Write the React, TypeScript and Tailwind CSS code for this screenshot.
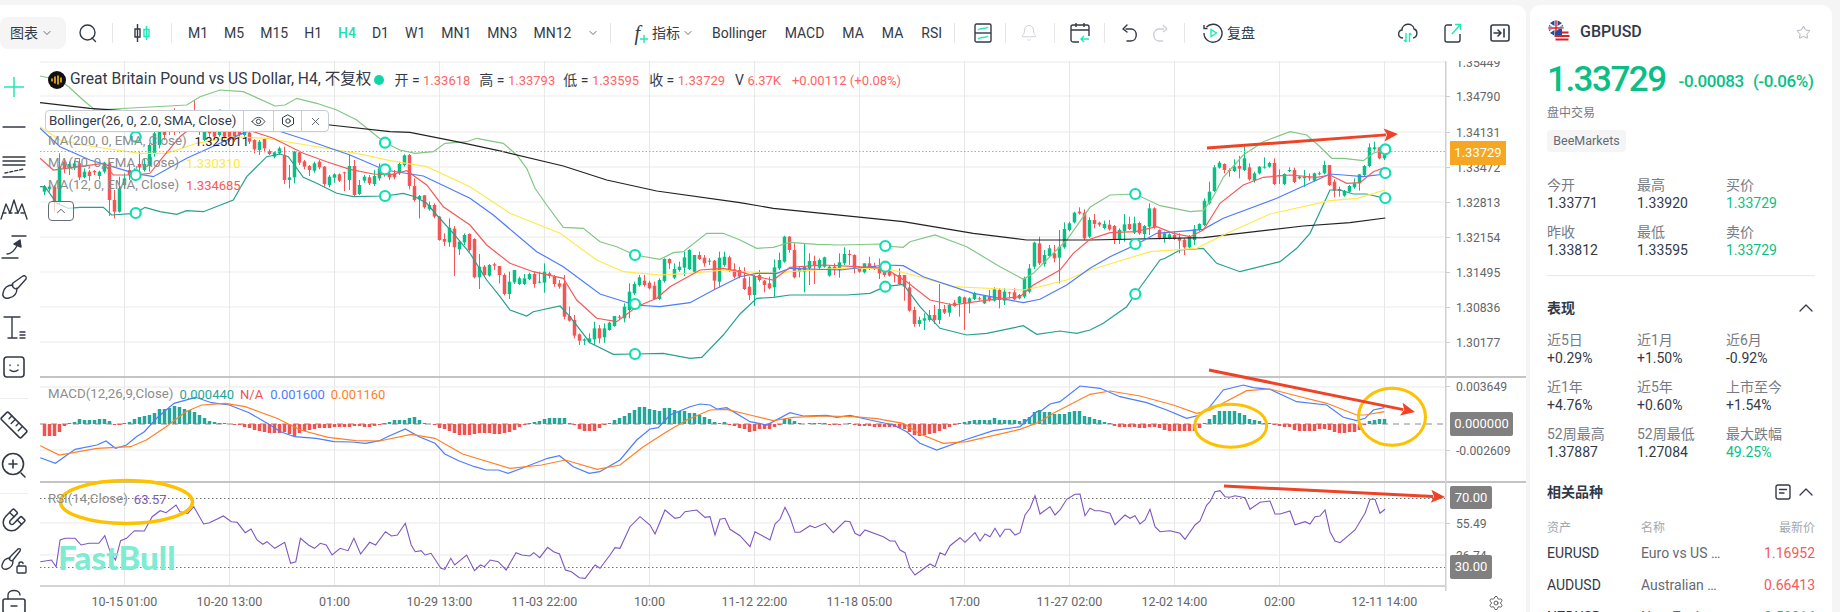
import React from "react";
import { Bell, ChevronDown, ChevronUp, Magnet, Settings, Star, X } from "lucide-react";

type P = number[];

const Z = (ox: number, pts: P[]) => pts.map(([x, y]) => [ox + x / 3, 90 + y / 3]);
const Y230 = (sx: number, ox: number, pts: P[]) => pts.map(([x, y]) => [ox + x / sx, 230 + y / 3]);
const toD = (pts: number[][]) => pts.map(([x, y], i) => `${i ? "L" : "M"}${x.toFixed(1)} ${y.toFixed(1)}`).join("");

const upper = [
  ...Z(40, [[0, -42], [57, -30], [87, -9], [129, 30], [165, 60], [440, 45], [480, 20], [540, 0], [610, 5], [705, 48], [735, 45], [770, 25], [830, 40], [890, 60], [950, 90], [1035, 158]]),
  ...Z(390, [[30, 180], [75, 190], [130, 185], [165, 160], [230, 155], [260, 145], [340, 160], [380, 195], [410, 235], [435, 295], [470, 345], [520, 412], [580, 415], [630, 455], [680, 470], [735, 495], [810, 508], [850, 488], [880, 485], [950, 430], [1000, 430], [1050, 450]]),
  ...Z(740, [[50, 475], [100, 472], [150, 457], [230, 463], [300, 465], [420, 462], [436, 468], [490, 472], [510, 455], [585, 435], [680, 470], [730, 500], [780, 530], [850, 568], [880, 550], [980, 450], [1050, 352]]),
  ...Z(1090, [[60, 315], [136, 312], [210, 347], [300, 365], [340, 362], [370, 320], [400, 262], [460, 195], [520, 155], [600, 125], [650, 135], [690, 170], [725, 205], [760, 205], [820, 212], [850, 190], [886, 178]]),
];
const lower = [
  ...Z(40, [[0, 290], [15, 290], [50, 340], [85, 355], [120, 352], [190, 352], [215, 375], [285, 370], [315, 352], [360, 365], [410, 373], [440, 362], [490, 365], [580, 330], [620, 260], [680, 200], [720, 192], [745, 200], [790, 262], [830, 280], [890, 310], [940, 320], [1035, 318]]),
  ...Z(390, [[40, 310], [75, 320], [110, 340], [140, 375], [190, 430], [240, 490], [290, 570], [330, 620], [360, 660], [410, 678], [430, 665], [510, 648], [540, 680], [600, 758], [670, 793], [735, 792], [820, 790], [900, 805], [935, 802], [1000, 735], [1050, 672]]),
  ...Z(740, [[50, 625], [100, 622], [150, 615], [320, 615], [390, 610], [436, 590], [490, 583], [540, 650], [600, 715], [680, 735], [740, 730], [850, 707], [890, 733], [960, 723], [1010, 730], [1050, 720]]),
  ...Z(1090, [[40, 700], [110, 650], [136, 612], [210, 510], [225, 505], [270, 480], [340, 475], [380, 520], [450, 545], [570, 515], [620, 475], [660, 430], [720, 300], [750, 300], [790, 312], [830, 312], [886, 325]]),
];
const ma12 = [
  ...Z(40, [[0, 205], [40, 240], [100, 232], [190, 220], [220, 255], [285, 255], [330, 250], [370, 200], [420, 140], [470, 100], [540, 60], [640, 125], [700, 145], [790, 190], [860, 215], [930, 238], [1000, 252], [1050, 255]]),
  ...Z(390, [[50, 242], [110, 285], [160, 350], [240, 405], [290, 465], [360, 520], [430, 545], [520, 565], [560, 630], [620, 685], [680, 695], [740, 650], [800, 625], [840, 590], [930, 540], [1000, 535], [1050, 545]]),
  ...Z(740, [[50, 560], [100, 570], [150, 532], [250, 525], [350, 530], [436, 535], [500, 575], [570, 630], [640, 645], [730, 632], [840, 620], [880, 585], [960, 540], [1000, 490], [1050, 448]]),
  ...Z(1090, [[60, 428], [136, 425], [200, 410], [250, 430], [300, 440], [340, 420], [390, 340], [460, 285], [520, 262], [600, 255], [680, 262], [720, 255], [770, 280], [810, 278], [850, 245], [886, 232]]),
];
const ma50 = [
  ...Z(40, [[0, 115], [60, 170], [150, 210], [285, 250], [340, 260], [440, 205], [550, 155], [620, 125], [700, 118], [800, 150], [930, 195], [1035, 240]]),
  ...Z(390, [[100, 258], [240, 325], [310, 375], [440, 485], [520, 530], [630, 612], [735, 645], [810, 650], [900, 638], [975, 598], [1050, 560]]),
  ...Z(740, [[50, 550], [110, 550], [150, 535], [300, 540], [436, 525], [490, 527], [550, 560], [700, 610], [850, 638], [900, 628], [980, 585], [1050, 535]]),
  ...Z(1090, [[60, 500], [136, 465], [200, 430], [340, 418], [400, 385], [560, 325], [720, 252], [760, 255], [820, 260], [886, 252]]),
];
const maYellow = [
  ...Z(40, [[0, 110], [60, 150], [130, 165], [230, 180], [300, 190], [380, 190], [470, 160], [580, 140], [680, 145], [800, 165], [950, 190], [1050, 212]]),
  ...Z(390, [[110, 230], [240, 290], [360, 370], [510, 430], [620, 510], [700, 545], [810, 555], [900, 550], [1000, 540], [1050, 545]]),
  ...Z(740, [[110, 550], [150, 545], [300, 535], [436, 535], [520, 555], [640, 590], [850, 600], [900, 590], [980, 570], [1050, 540]]),
  ...Z(1090, [[180, 485], [320, 475], [400, 435], [540, 372], [720, 332], [800, 325], [886, 300]]),
];
const maBlack = [
  ...Z(40, [[0, 38], [150, 55], [870, 105], [1050, 125]]),
  ...Z(390, [[60, 127], [200, 155], [340, 185], [520, 228], [650, 270], [800, 303], [1050, 338]]),
  ...Z(740, [[100, 355], [490, 395], [700, 430], [860, 450], [1050, 450]]),
  ...Z(1090, [[340, 443], [640, 408], [780, 398], [886, 384]]),
];

// [green, high, top, bottom, low], one row per bar
const bars: number[][] = [
  [1,285,290,305,315],[1,285,290,298,305],[0,285,290,335,365],[1,190,230,335,345],[0,205,215,235,250],[1,215,222,235,255],[1,212,220,235,240],[0,205,220,262,270],[1,235,245,262,265],[0,240,245,258,272],
  [0,240,243,247,255],[1,242,245,258,268],[1,215,218,245,250],[0,215,220,330,378],[0,300,330,365,385],[1,260,295,365,368],[1,250,265,285,295],[0,225,240,255,270],[1,235,240,250,260],[0,185,222,232,245],
  [1,205,222,240,245],[1,160,165,228,245],[1,125,130,190,200],[1,118,120,165,175],[0,110,120,135,150],[1,95,110,125,135],[0,55,100,125,135],[1,80,100,120,130],[0,60,100,115,125],[1,70,85,110,120],
  [0,30,70,100,120],[0,80,100,125,135],[1,100,105,150,155],[0,105,110,130,140],[0,115,120,140,150],[1,105,110,135,140],[0,120,125,140,148],[0,120,125,150,155],[0,118,120,150,155],[0,122,125,135,140],
  [1,118,120,135,140],[0,122,128,155,162],[0,148,150,178,190],[1,150,155,180,195],[0,145,147,175,187],[0,178,183,192,195],[1,185,187,200,205],[1,170,175,190,195],[0,170,197,270,282],[1,225,262,270,295],
  [1,183,185,262,280],[0,185,187,218,225],[0,210,214,230,238],[0,225,228,240,258],[1,215,220,242,248],[0,210,215,232,238],[0,228,230,282,290],[1,255,260,285,292],[1,250,253,263,278],[0,250,253,272,276],
  [0,245,247,248,303],[1,195,228,270,300],[0,210,228,315,320],[1,270,285,312,315],[1,255,260,272,278],[0,255,262,280,285],[1,240,258,282,288],[1,220,235,265,272],[0,238,240,252,260],[0,245,250,262,270],
  [0,240,250,262,268],[1,215,222,250,255],[1,193,196,225,230],[0,192,195,288,298],[0,265,288,330,335],[1,315,318,328,385],[0,315,316,352,356],[1,335,345,358,362],[0,340,345,380,385],[0,378,380,450,452],
  [0,430,447,455,468],[1,385,413,457,470],[0,408,416,472,558],[1,450,455,478,495],[1,430,435,457,465],[0,430,432,480,485],[0,445,447,562,565],[1,492,530,562,597],[0,525,530,555,560],[1,522,525,557,560],
  [0,518,523,527,540],[0,528,528,555,580],[0,550,555,612,616],[1,545,575,612,627],[1,540,540,577,582],[1,560,565,582,585],[1,552,565,582,585],[1,548,552,567,570],[0,545,552,582,593],[1,545,575,578,580],
  [1,520,545,578,608],[0,545,550,558,565],[0,555,560,582,590],[0,570,580,590,596],[0,555,580,680,688],[0,650,678,692,695],[0,675,690,737,745],[0,730,733,752,765],[1,745,748,752,765],[1,730,745,757,760],
  [1,695,715,748,765],[0,705,715,745,760],[1,700,715,742,758],[1,695,698,720,722],[1,680,678,708,710],[0,675,680,682,690],[1,640,650,685,697],[1,580,605,660,685],[1,575,582,610,615],[1,555,562,585,590],
  [0,555,572,585,590],[0,572,578,595,598],[0,575,587,627,630],[1,565,570,627,630],[1,505,507,573,578],[0,505,507,520,537],[1,520,537,563,567],[1,515,530,540,545],[1,485,502,533,558],[1,478,480,537,540],
  [1,495,495,545,548],[0,485,495,507,510],[0,495,503,520,530],[1,505,512,515,525],[0,510,512,572,598],[1,485,503,575,592],[1,485,500,525,530],[0,497,502,543,546],[0,520,538,560,565],[0,530,540,560,565],
  [0,532,565,597,600],[0,560,590,615,630],[1,555,558,615,648],[0,540,555,570,575],[0,570,572,585,607],[0,560,580,595,598],[1,508,532,592,620],[1,488,510,535,540],[1,437,440,515,518],[0,438,440,480,488],
  [0,460,480,562,565],[1,530,535,545,562],[1,462,530,545,607],[1,490,513,535,585],[0,497,513,527,582],[1,505,510,533,537],[1,500,502,530,533],[1,525,530,557,560],[0,520,530,540,555],[1,490,517,540,563],
  [1,472,492,520,525],[0,480,492,495,525],[0,493,495,535,550],[0,530,533,545,548],[1,520,520,547,550],[0,500,520,535,540],[0,518,528,532,540],[0,505,530,550,567],[0,535,540,555,560],[0,530,545,557,560],
  [0,552,553,556,577],[0,535,555,582,585],[0,555,555,590,632],[0,575,592,662,665],[0,650,660,702,710],[1,680,690,702,710],[1,670,685,692,720],[1,660,675,690,695],[0,645,675,690,702],[1,582,657,690,702],
  [0,645,657,668,672],[1,640,645,668,680],[0,630,638,648,650],[1,618,620,640,680],[0,620,622,642,720],[1,622,625,640,670],[1,605,610,627,630],[0,620,625,628,632],[1,615,618,640,642],[0,600,620,630,635],
  [1,592,598,632,635],[0,595,600,630,655],[1,595,605,632,645],[0,605,607,610,625],[0,595,607,628,630],[1,612,615,625,628],[1,560,565,620,625],[1,522,535,605,610],[1,455,458,530,537],[0,440,460,520,525],
  [1,480,495,522,530],[1,465,475,498,502],[0,465,490,505,517],[1,420,470,503,580],[1,397,417,472,476],[1,395,400,420,424],[1,365,368,397,400],[0,352,365,370,374],[0,358,368,445,450],[1,382,390,440,444],
  [0,372,390,402,415],[0,395,398,404,410],[1,392,402,414,418],[0,390,404,418,422],[0,405,408,450,462],[1,415,420,450,462],[1,372,403,423,455],[0,380,402,417,420],[1,380,400,428,432],[0,395,399,430,434],
  [1,405,408,432,445],[1,340,355,410,435],[0,352,355,412,416],[0,418,420,445,448],[1,425,430,445,458],[1,430,433,445,448],[0,425,435,447,450],[0,430,443,452,490],[0,445,449,472,495],[1,435,440,472,476],
  [1,405,418,450,465],[1,400,402,420,424],[1,325,332,405,408],[1,275,305,340,344],[1,225,232,303,306],[1,213,218,233,236],[0,220,222,240,250],[0,235,240,240,260],[1,208,230,243,246],[0,198,228,236,265],
  [1,170,205,240,243],[0,220,232,268,272],[1,245,250,272,278],[1,228,230,250,253],[1,202,230,233,236],[1,215,219,230,233],[0,205,219,282,285],[1,238,255,258,282],[1,250,252,282,285],[1,232,240,243,246],
  [0,233,240,276,279],[1,258,260,265,268],[1,240,260,265,290],[0,250,262,265,272],[1,248,250,272,275],[1,245,250,253,256],[1,212,225,250,253],[0,225,225,285,288],[0,268,275,302,322],[0,290,297,303,320],
  [1,300,303,317,320],[1,285,288,305,308],[1,265,280,292,296],[1,252,253,280,302],[1,225,228,255,258],[1,160,172,228,232],[1,155,172,178,182],[0,172,172,205,208],[1,185,195,205,210],
];

const hist: number[] = [
  -12,-12,-12,-8,-2,1,2,5,4,4,4,5,5,3,-1,-1,1,2,5,7,8,9,11,15,15,16,18,17,15,14,12,9,6,3,2,1,1,0,-1,-1,
  -3,-4,-6,-7,-8,-9,-9,-9,-8,-10,-12,-9,-7,-6,-5,-4,-4,-4,-3,-3,-3,-3,-2,-2,-3,-3,-2,-1,1,2,4,4,4,6,7,4,1,0,-1,-4,
  -5,-7,-9,-11,-11,-11,-10,-9,-9,-9,-10,-10,-9,-8,-6,-3,-1,1,2,3,5,6,6,6,6,1,-1,-5,-7,-7,-7,-4,-1,
  1,4,6,8,11,14,17,17,15,14,13,16,16,14,13,13,11,11,9,7,5,2,1,2,-1,-2,-4,-5,-8,-7,-5,-5,-5,-3,-1,5,5,3,1,0,1,1,1,1,-1,-1,-1,0,1,-1,-2,-2,-2,-3,-3,-3,-3,-3,-4,-5,-8,-11,-12,-11,-10,-9,-7,-5,-3,-1,1,2,3,4,4,4,4,6,4,4,4,4,3,5,7,12,14,
  12,12,10,10,10,12,13,13,8,7,5,4,2,1,-2,-3,-3,-3,-3,-4,-4,-3,-3,-4,-6,-7,-7,-7,-7,-7,-7,-4,1,5,9,13,13,13,13,11,9,5,4,3,1,1,-1,-2,-3,-3,-6,-7,-7,-7,-7,-5,-5,-6,-8,-9,-9,-8,-8,-6,-1,3,4,5,5,
];

const difLine = [
  ...Y230(2.529, 0, [[102,683],[140,700],[190,658],[245,645],[268,633],[292,655],[320,645],[345,620],[365,605],[400,560],[440,520],[495,502],[535,518],[580,525],[630,548],[680,583],[710,605],[745,620],[800,625],[845,635],[890,636],[925,640],[960,632],[980,620],[1025,597],[1060,620],[1100,640],[1125,672],[1160,692],[1200,710],[1230,720],[1260,720],[1285,730],[1320,715],[1385,685],[1415,677],[1450,710],[1490,730],[1517,725]]),
  ...Y230(3, 600, [[60,690],[110,630],[150,597],[175,593],[210,555],[270,530],[300,522],[330,525],[350,537],[380,533],[450,575],[500,585],[570,548],[610,558],[680,556],[710,562],[750,556],[810,570],[880,585],[920,605],[960,640],[1010,660],[1100,628],[1180,602],[1260,590],[1310,545]]),
  ...Y230(3, 1040, [[0,545],[30,522],[60,515],[120,468],[180,475],[240,500],[320,518],[380,540],[440,565],[480,555],[510,530],[550,480],[610,465],[640,473],[690,478],[770,515],[860,525],[910,562],[950,572],[975,565],[1000,540],[1033,533]]),
];
const deaLine = [
  ...Y230(2.529, 0, [[102,647],[150,675],[245,655],[330,650],[370,630],[420,590],[470,545],[510,525],[570,520],[620,530],[700,565],[760,600],[830,622],[900,632],[960,633],[1040,613],[1100,625],[1170,672],[1290,715],[1370,705],[1430,690],[1510,718]]),
  ...Y230(3, 600, [[60,705],[130,650],[200,605],[260,570],[330,540],[380,538],[450,555],[520,572],[580,562],[670,558],[760,560],[830,566],[910,580],[960,612],[1030,640],[1100,635],[1260,598],[1320,575]]),
  ...Y230(3, 1040, [[40,550],[150,493],[210,483],[300,498],[400,525],[470,550],[510,540],[620,482],[690,477],[760,495],[860,520],[950,555],[975,555],[1033,545]]),
];
const rsiLine = [
  ...Y230(2.529, 0, [[102,995],[130,990],[142,1010],[152,930],[165,925],[190,925],[205,945],[225,940],[250,940],[265,917],[280,970],[292,990],[305,932],[320,925],[340,902],[365,903],[385,860],[405,842],[420,848],[445,825],[455,845],[475,850],[490,830],[515,882],[530,878],[565,858],[585,875],[600,877],[620,908],[635,897],[650,930],[665,943],[675,935],[695,955],[720,937],[735,1000],[748,995],[760,925],[780,945],[795,955],[810,940],[825,945],[840,975],[860,955],[880,962],[895,925],[912,972],[935,937],[950,945],[975,905],[990,918],[1005,915],[1025,880],[1040,945],[1050,965],[1065,962],[1075,975],[1090,970],[1115,1015],[1125,1018],[1140,985],[1150,1005],[1180,975],[1200,1022],[1215,1005],[1225,1010],[1240,990],[1260,995],[1280,1020],[1305,968],[1320,975],[1340,978],[1350,968],[1365,983],[1385,952],[1400,965],[1415,972],[1430,1020],[1445,1025],[1465,1043],[1480,1045],[1505,1005]]),
  ...Y230(3, 600, [[0,1015],[30,975],[45,953],[60,955],[90,890],[120,860],[150,885],[165,912],[195,840],[225,865],[240,862],[255,845],[290,840],[315,862],[330,860],[345,915],[360,868],[375,865],[390,898],[420,917],[450,950],[465,905],[510,930],[525,882],[540,868],[555,832],[570,862],[585,907],[600,907],[630,887],[645,893],[675,880],[700,908],[735,873],[750,875],[765,910],[780,917],[795,900],[850,920],[870,933],[885,933],[900,960],[915,968],[930,1015],[945,1035],[990,1002],[1005,1010],[1020,968],[1035,975],[1050,947],[1080,923],[1095,937],[1125,908],[1140,933],[1155,912],[1170,920],[1185,895],[1200,920],[1215,898],[1230,898],[1245,915],[1260,908],[1275,855],[1290,835],[1305,797]]),
  ...Y230(3, 1040, [[0,852],[30,830],[45,855],[60,840],[80,808],[105,793],[120,792],[135,857],[150,835],[165,842],[180,842],[210,850],[225,884],[255,855],[270,865],[285,857],[300,882],[315,870],[330,838],[345,890],[360,905],[390,902],[420,910],[435,928],[465,885],[480,873],[500,825],[510,815],[525,785],[540,782],[555,800],[570,802],[585,797],[615,803],[630,838],[660,817],[690,813],[705,852],[720,852],[750,843],[765,884],[795,875],[810,882],[825,860],[840,858],[855,840],[870,905],[885,933],[900,938],[945,900],[975,850],[990,808],[1005,808],[1020,850],[1035,838]]),
];

const mainGrid = [96, 132, 167, 202, 237, 272, 307, 342];
const priceLabels: [number, string][] = [[96, "1.34790"], [132, "1.34131"], [167, "1.33472"], [202, "1.32813"], [237, "1.32154"], [272, "1.31495"], [307, "1.30836"], [342, "1.30177"], [62, "1.35449"]];
const timeLabels: [number, string][] = [[124.5, "10-15 01:00"], [229.5, "10-20 13:00"], [334.5, "01:00"], [439.5, "10-29 13:00"], [544.5, "11-03 22:00"], [649.5, "10:00"], [754.5, "11-12 22:00"], [859.5, "11-18 05:00"], [964.5, "17:00"], [1069.5, "11-27 02:00"], [1174.5, "12-02 14:00"], [1279.5, "02:00"], [1384.5, "12-11 14:00"]];
const rings = [[135.7, 136.7], [135.7, 175], [135.7, 213], [385, 142.7], [385, 169.3], [385, 196], [635, 255], [635, 304], [635, 354], [885.3, 246], [885.3, 266.7], [885.3, 286.7], [1135.3, 194], [1135.3, 244], [1135.3, 294], [1385.3, 149.3], [1385.3, 173], [1385.3, 198]];

function Arrow({ x1, y1, x2, y2 }: { x1: number; y1: number; x2: number; y2: number }) {
  const a = Math.atan2(y2 - y1, x2 - x1);
  const bx = x2 - 12 * Math.cos(a);
  const by = y2 - 12 * Math.sin(a);
  const px = 6.5 * Math.sin(a);
  const py = 6.5 * Math.cos(a);
  return (
    <g>
      <path d={`M${x1} ${y1}L${bx} ${by}`} stroke="#ee4326" strokeWidth="3" />
      <path d={`M${x2} ${y2}L${bx - px - 2 * Math.cos(a)} ${by + py - 2 * Math.sin(a)}L${bx + 1 * Math.cos(a)} ${by + Math.sin(a)}L${bx + px - 2 * Math.cos(a)} ${by - py - 2 * Math.sin(a)}Z`} fill="#ee4326" />
    </g>
  );
}

function ChartCanvas() {
  return (
    <svg viewBox="40 61 1486 551" className="block w-[1486px] h-[551px]">
      <defs>
        <clipPath id="chart-clip">
          <rect x="40" y="61" width="1405" height="525" />
        </clipPath>
        <clipPath id="axis-clip">
          <rect x="1446" y="61" width="80" height="551" />
        </clipPath>
      </defs>

      {mainGrid.map((y) => (
        <rect key={y} x="40" y={y - 1} width="1405" height="2" fill="#f5f5f5" />
      ))}
      <rect x="40" y="61" width="1405" height="2" fill="#f5f5f5" />
      {[387, 450, 523, 555].map((y) => (
        <rect key={y} x="40" y={y - 1} width="1405" height="2" fill="#f4f4f4" />
      ))}
      {timeLabels.map(([x]) => (
        <rect key={x} x={x - 0.5} y="61" width="1" height="525" fill="#e8e8e8" />
      ))}

      <g clipPath="url(#chart-clip)">
        {bars.map((b, i) => {
          const x = 44.5 + i * 5;
          const col = b[0] ? "#0abf85" : "#f55555";
          return (
            <g key={i} fill={col}>
              <rect x={x - 0.5} y={90 + b[1] / 3} width="1" height={(b[4] - b[1]) / 3} />
              <rect x={x - 1.75} y={90 + b[2] / 3} width="3.5" height={Math.max(1, (b[3] - b[2]) / 3)} />
            </g>
          );
        })}
        <path d={toD(upper)} fill="none" stroke="#82c784" strokeWidth="1.2" />
        <path d={toD(lower)} fill="none" stroke="#26a08f" strokeWidth="1.2" />
        <path d={toD(maBlack)} fill="none" stroke="#222222" strokeWidth="1.2" />
        <path d={toD(maYellow)} fill="none" stroke="#ffe94d" strokeWidth="1.2" />
        <path d={toD(ma50)} fill="none" stroke="#4d7cfe" strokeWidth="1.2" />
        <path d={toD(ma12)} fill="none" stroke="#f55a5a" strokeWidth="1.2" />

        <path d="M40 151.5H1445" stroke="#e8a33d" strokeWidth="1" strokeDasharray="1.5 2" />

        <path d="M40 424H1445" stroke="#8a8a8a" strokeWidth="1" strokeDasharray="6 5" />
        {hist.map((v, i) => (
          <rect key={i} x={44.5 + i * 5 - 1.75} y={v > 0 ? 424 - v : 424} width="3.5" height={Math.abs(v)} fill={v > 0 ? "#26a69a" : "#ef5350"} />
        ))}
        <path d={toD(difLine)} fill="none" stroke="#4d7cfe" strokeWidth="1.2" />
        <path d={toD(deaLine)} fill="none" stroke="#ff8126" strokeWidth="1.2" />

        <path d="M40 498.5H1445M40 567.5H1445" stroke="#777777" strokeWidth="1" strokeDasharray="1.5 2.5" />
        <path d={toD(rsiLine)} fill="none" stroke="#7e57c2" strokeWidth="1.1" />
      </g>

      {rings.map(([x, y], i) => (
        <circle key={i} cx={x} cy={y} r="5" fill="#ffffff" stroke="#0ae0b0" strokeWidth="2.2" />
      ))}

      <rect x="40" y="376" width="1486" height="2" fill="#c4c4c4" />
      <rect x="40" y="481" width="1486" height="2" fill="#c4c4c4" />
      <rect x="40" y="585" width="1405" height="2" fill="#d4d4d4" />
      <rect x="1445" y="61" width="1.5" height="530" fill="#d0d0d0" />

      {[96, 132, 167, 202, 237, 272, 307, 342, 386, 450, 523].map((y) => (
        <rect key={y} x="1446" y={y} width="4" height="1" fill="#cccccc" />
      ))}

      <g clipPath="url(#axis-clip)" className="fill-[#666666] text-[12.2px]">
        {priceLabels.map(([y, t]) => (
          <text key={t} x="1456" y={y + 4.5}>{t}</text>
        ))}
        <text x="1456" y="390.5">0.003649</text>
        <text x="1456" y="454.5">-0.002609</text>
        <text x="1456" y="527.5">55.49</text>
        <text x="1456" y="559.5">36.74</text>
      </g>

      <g className="fill-[#666666] text-[12.5px]" textAnchor="middle">
        {timeLabels.map(([x, t]) => (
          <text key={t} x={x} y="606">{t}</text>
        ))}
      </g>

      <ellipse cx="1230.7" cy="425.7" rx="36" ry="21.5" fill="none" stroke="#fdc100" strokeWidth="3" />
      <ellipse cx="1392" cy="416.7" rx="33.5" ry="28.5" fill="none" stroke="#fdc100" strokeWidth="3" />
      <ellipse cx="126.5" cy="502" rx="66" ry="21.5" fill="none" stroke="#fdc100" strokeWidth="3.5" />

      <Arrow x1={1207} y1={148} x2={1398} y2={134} />
      <Arrow x1={1209} y1={370} x2={1415} y2={412} />
      <Arrow x1={1224} y1={486} x2={1445} y2={497} />
    </svg>
  );
}

function Tool({ children }: { children: React.ReactNode }) {
  return <div className="h-[40px] w-7 flex items-center justify-center shrink-0">{children}</div>;
}

const ink = { fill: "none", stroke: "#333a47", strokeWidth: 1.4, strokeLinecap: "round", strokeLinejoin: "round" } as const;

function LeftTools() {
  return (
    <div className="w-10 shrink-0 pt-[6px] overflow-hidden">
      <Tool>
        <svg viewBox="0 0 28 28" className="w-7 h-7" fill="none" stroke="#1de9b6" strokeWidth="1.5"><path d="M4 14H24M14 4V24" /></svg>
      </Tool>
      <Tool>
        <svg viewBox="0 0 28 28" className="w-7 h-7" {...ink}><path d="M3 14H25" /></svg>
      </Tool>
      <Tool>
        <svg viewBox="0 0 28 28" className="w-7 h-7" {...ink}><path d="M3 4H25M3 8H25M3 12H25M3 24H25" /><path d="M5 20L24 16" strokeDasharray="3 2" /></svg>
      </Tool>
      <Tool>
        <svg viewBox="0 0 28 28" className="w-7 h-7" {...ink}><path d="M1 26L6 11L10 20L14 7L18 20L22 11L27 26" /><path d="M3 20H25" strokeDasharray="3 3" /></svg>
      </Tool>
      <Tool>
        <svg viewBox="0 0 28 28" className="w-7 h-7" {...ink}><path d="M12 3H26M2 25H18M7 21C12 21 15 17 18 11" /><path d="M14 11L20 7L21 14Z" fill="#333a47" /></svg>
      </Tool>
      <Tool>
        <svg viewBox="0 0 28 28" className="w-7 h-7" {...ink}><path d="M23 3C25 2 27 4 26 6L18 15C17 16 15 16 14 15L13 14C12 13 12 11 13 10Z" /><path d="M13 12C8 12 4 15 3 20C2 24 5 26 9 25C14 24 17 20 17 15" /></svg>
      </Tool>
      <Tool>
        <svg viewBox="0 0 28 28" className="w-7 h-7" {...ink}><path d="M4 4H20M12 4V25M8 25H17M20 19H25M20 22H25M20 25H25" /></svg>
      </Tool>
      <Tool>
        <svg viewBox="0 0 28 28" className="w-7 h-7" {...ink}><rect x="4" y="4" width="20" height="20" rx="3" strokeWidth="1.6" /><path d="M10 12V12.5M18 12V12.5M10 17C12 19 16 19 18 17" /></svg>
      </Tool>
      <div className="h-px bg-[#eeeeee] w-7 mt-[11px] mb-[6px]" />
      <Tool>
        <svg viewBox="0 0 28 28" className="w-7 h-7" {...ink}><g transform="rotate(45 14 14)"><rect x="0" y="9" width="28" height="10" rx="1.5" strokeWidth="1.6" /><path d="M6 9V13M11 9V15M16 9V13M21 9V15" /></g></svg>
      </Tool>
      <Tool>
        <svg viewBox="0 0 28 28" className="w-7 h-7" {...ink}><circle cx="13" cy="13" r="10.5" strokeWidth="1.6" /><path d="M9 13H17M13 9V17M21 22L25 26" strokeWidth="1.6" /></svg>
      </Tool>
      <div className="h-px bg-[#eeeeee] w-7 mt-[8px] mb-[6px]" />
      <Tool>
        <Magnet className="w-[26px] h-[26px] rotate-180 text-[#333a47]" strokeWidth={1.4} />
      </Tool>
      <Tool>
        <svg viewBox="0 0 28 28" className="w-7 h-7" {...ink}><path d="M18 3C20 2 21 3 20 5L13 14C12 15 11 15 10 14C9 13 9 12 10 11Z" /><path d="M10 12C6 12 3 15 2 19C1 22 4 24 7 23C10 22 13 19 13 15" /><rect x="17" y="20" width="9" height="7" rx="1" /><path d="M19 20V17.5C19 15.5 23 15.5 23 17.5" /></svg>
      </Tool>
      <Tool>
        <svg viewBox="0 0 28 28" className="w-7 h-7" {...ink}><path d="M8 13V9C8 3 20 3 20 9" /><rect x="3" y="13" width="22" height="14" rx="2" strokeWidth="1.6" /><path d="M11 20H17" /></svg>
      </Tool>
    </div>
  );
}

function Sep({ className }: { className: string }) {
  return <div className={`w-px h-5 bg-[#e6e6e6] shrink-0 ${className}`} />;
}

const periods = ["M1", "M5", "M15", "H1", "H4", "D1", "W1", "MN1", "MN3", "MN12"];

function TopBar() {
  return (
    <div className="h-[56px] flex items-center text-[14px] text-[#333a47] shrink-0">
      <div className="w-[66px] h-[32px] bg-[#f5f5f5] rounded-lg flex items-center pl-[10px] gap-[3px] shrink-0">
        <span>图表</span>
        <ChevronDown className="w-3 h-3" strokeWidth={1.5} />
      </div>
      <svg viewBox="0 0 20 20" className="w-5 h-5 ml-[12px]" {...ink}><circle cx="9.5" cy="9.5" r="7.5" /><path d="M14 15L17.5 18.5" /></svg>
      <Sep className="ml-[14px]" />
      <svg viewBox="0 0 18 20" className="w-[18px] h-5 ml-[20px]" fill="none" strokeWidth="1.4">
        <path d="M4.5 1V19M2 6H7V14H2Z" stroke="#333a47" />
        <path d="M13.5 3V17M11 6.5H16V13.5H11Z" stroke="#1de9b6" />
      </svg>
      <Sep className="ml-[20px]" />
      <div className="flex items-center gap-4 ml-[16px]">
        {periods.map((p) => (
          <span key={p} className={p === "H4" ? "text-[#1de0ae] font-medium" : ""}>{p}</span>
        ))}
      </div>
      <ChevronDown className="w-3 h-3 ml-[16px]" strokeWidth={1.5} />
      <Sep className="ml-[11px]" />
      <div className="flex items-center ml-[23px] gap-[2px]">
        <span className="font-['Liberation_Serif',serif] italic text-[20px] leading-none">f</span>
        <svg viewBox="0 0 8 8" className="w-2 h-2 mt-3 -ml-[2px]" stroke="#1de9b6" strokeWidth="1.4"><path d="M0 4H8M4 0V8" /></svg>
      </div>
      <span className="ml-[4px]">指标</span>
      <ChevronDown className="w-3 h-3 ml-[2px]" strokeWidth={1.5} />
      <div className="flex items-center gap-[18px] ml-[18px]">
        <span>Bollinger</span>
        <span>MACD</span>
        <span>MA</span>
        <span>MA</span>
        <span>RSI</span>
      </div>
      <Sep className="ml-[12px]" />
      <svg viewBox="0 0 18 20" className="w-[18px] h-5 ml-[19px]" fill="none" strokeWidth="1.4">
        <rect x="1" y="1" width="16" height="18" rx="1.5" stroke="#333a47" />
        <path d="M1 10H17" stroke="#333a47" />
        <path d="M4 7C7 4 10 7 14 4M4 16C7 13 10 16 14 13" stroke="#1de9b6" />
      </svg>
      <Sep className="ml-[13px]" />
      <Bell className="w-[18px] h-[20px] ml-[14px] text-[#ccd0d6]" strokeWidth={1.3} />
      <Sep className="ml-[16px]" />
      <svg viewBox="0 0 20 22" className="w-5 h-[22px] ml-[15px]" fill="none" strokeWidth="1.4">
        <path d="M9 20H3C2 20 1 19 1 18V5C1 4 2 3 3 3H17C18 3 19 4 19 5V14M1 8H19M6 1V5M14 1V5" stroke="#333a47" />
        <path d="M19 17H11M14 14L11 17L14 20" stroke="#1de9b6" />
      </svg>
      <Sep className="ml-[14px]" />
      <svg viewBox="0 0 16 20" className="w-4 h-5 ml-[17px]" {...ink}><path d="M4 6H9C16 6 16 18 9 18H5M1 6L5 2M1 6L5 9" /></svg>
      <svg viewBox="0 0 16 20" className="w-4 h-5 ml-[14px]" fill="none" stroke="#ccd0d6" strokeWidth="1.4"><path d="M12 6H7C0 6 0 18 7 18H11M15 6L11 2M15 6L11 9" /></svg>
      <Sep className="ml-[16px]" />
      <svg viewBox="0 0 20 20" className="w-5 h-5 ml-[18px]" fill="none" strokeWidth="1.4">
        <path d="M3.5 4A9 9 0 1 1 1 10M1 2V5.5H4.5" stroke="#333a47" />
        <path d="M8 6.5L13.5 10L8 13.5Z" stroke="#1de9b6" />
      </svg>
      <span className="ml-[4px]">复盘</span>
      <svg viewBox="0 0 20 22" className="w-5 h-[22px] ml-auto" fill="none" strokeWidth="1.4">
        <path d="M5 16C1 16 0 13 1 10C2 8 3 8 4 8C4 1 15 0 16 7C20 8 20 15 15 16" stroke="#333a47" />
        <path d="M8 11V20M11.5 11V20M6 18L8 20M13.5 13L11.5 11" stroke="#1de9b6" />
      </svg>
      <svg viewBox="0 0 18 20" className="w-[18px] h-5 ml-[26px]" fill="none" strokeWidth="1.4">
        <path d="M8 2H3C2 2 1 3 1 4V17C1 18 2 19 3 19H14C15 19 16 18 16 17V11" stroke="#333a47" />
        <path d="M8 11L16 2M11 1.5H16.5V7" stroke="#1de9b6" />
      </svg>
      <svg viewBox="0 0 20 20" className="w-5 h-5 ml-[28px] mr-[16px]" {...ink}><rect x="1" y="2" width="18" height="16" rx="2" strokeWidth="1.6" /><path d="M4 10H11M8 7L11 10L8 13M14 6V14" strokeWidth="1.6" /></svg>
    </div>
  );
}

function Quote({ name, value, className }: { name: string; value: string; className: string }) {
  return (
    <span className={className}>
      {name} = <span className="text-[#ff6464] text-[13px]">{value}</span>
    </span>
  );
}

function Legend() {
  return (
    <div className="absolute left-0 top-0 text-[13.3px] leading-none">
      <div className="absolute left-[8px] top-[10px] flex items-center h-[18px] whitespace-nowrap text-[14px] text-[#333a47]">
        <svg viewBox="0 0 18 18" className="w-[18px] h-[18px] shrink-0">
          <circle cx="9" cy="9" r="9" fill="#111111" />
          <path d="M4 7.5V10.5M7 5.5V12.5M10 4.5V13.5M13 6.5V11.5" stroke="#f5b81f" strokeWidth="1.6" />
        </svg>
        <span className="ml-[4px] text-[15.6px]">Great Britain Pound vs US Dollar, H4, 不复权</span>
        <span className="ml-[3px] w-[10px] h-[10px] rounded-full bg-[#0fd6a5] shrink-0" />
        <Quote name="开" value="1.33618" className="ml-[10px]" />
        <Quote name="高" value="1.33793" className="ml-[9px]" />
        <Quote name="低" value="1.33595" className="ml-[8px]" />
        <Quote name="收" value="1.33729" className="ml-[10px]" />
        <span className="ml-[10px]">V <span className="text-[#ff6464] text-[13px]">6.37K</span></span>
        <span className="ml-[11px] text-[13px] text-[#ff6464]">+0.00112 (+0.08%)</span>
      </div>

      <div className="absolute left-[5px] top-[49px] w-[284px] h-[22px] bg-white border border-[#c8ccd4] rounded flex items-center whitespace-nowrap text-[#333a47]">
        <span className="pl-[3px] w-[197px] shrink-0">Bollinger(26, 0, 2.0, SMA, Close)</span>
        <div className="w-[30px] h-full border-l border-[#c8ccd4] flex items-center justify-center">
          <svg viewBox="0 0 16 12" className="w-[15px] h-[11px]" {...ink} strokeWidth="1"><path d="M1 6C5 0 11 0 15 6C11 12 5 12 1 6Z" /><circle cx="8" cy="6" r="2.4" /></svg>
        </div>
        <div className="w-[28px] h-full border-l border-[#c8ccd4] flex items-center justify-center">
          <svg viewBox="0 0 14 14" className="w-[14px] h-[14px]" {...ink} strokeWidth="1"><path d="M7 1L12.5 4V10L7 13L1.5 10V4Z" /><circle cx="7" cy="7" r="2.2" /></svg>
        </div>
        <div className="flex-1 h-full border-l border-[#c8ccd4] flex items-center justify-center">
          <X className="w-[13px] h-[13px]" strokeWidth={1.4} />
        </div>
      </div>

      <div className="absolute left-[8px] top-[69px] flex flex-col whitespace-nowrap text-[#8c8c8c]">
        <div className="h-[22px] flex items-center">MA(200, 0, EMA, Close)<span className="ml-[8px] text-[13px] text-[#222222]">1.325011</span></div>
        <div className="h-[22px] flex items-center">MA(50, 0, EMA, Close)<span className="ml-[7px] text-[13px] text-[#ffeb3b]">1.330310</span></div>
        <div className="h-[22px] flex items-center">MA(12, 0, EMA, Close)<span className="ml-[7px] text-[13px] text-[#f55a5a]">1.334685</span></div>
      </div>

      <div className="absolute left-[8px] top-[140px] w-[26px] h-[20px] border border-[#666b75] rounded bg-white/70 flex items-center justify-center">
        <ChevronUp className="w-[14px] h-[14px] text-[#333a47]" strokeWidth={1.4} />
      </div>

      <div className="absolute left-[8px] top-[325px] h-[16px] flex items-center whitespace-nowrap text-[#8c8c8c]">
        MACD(12,26,9,Close)
        <span className="ml-[6px] text-[13px] text-[#26a69a]">0.000440</span>
        <span className="ml-[6px] text-[13px] text-[#ef5350]">N/A</span>
        <span className="ml-[7px] text-[13px] text-[#4d7cfe]">0.001600</span>
        <span className="ml-[6px] text-[13px] text-[#ff8126]">0.001160</span>
      </div>

      <div className="absolute left-[8px] top-[430px] h-[16px] flex items-center whitespace-nowrap text-[#8c8c8c]">
        RSI(14,Close)
        <span className="ml-[6px] text-[13px] text-[#7e57c2]">63.57</span>
      </div>

      <div className="absolute left-[18px] top-[480px] font-['Lato',sans-serif] font-black text-[33px] leading-[33px] text-[#7eecd3] whitespace-nowrap">FastBull</div>
    </div>
  );
}

function AxisTags() {
  return (
    <>
      <div className="absolute left-[1410px] top-[80px] w-[56px] h-[24px] bg-[#f5a623] text-white text-[13px] flex items-center justify-center">1.33729</div>
      <div className="absolute left-[1410px] top-[351px] w-[63px] h-[24px] bg-[#808080] rounded-[2px] text-white text-[13px] flex items-center justify-center">0.000000</div>
      <div className="absolute left-[1410px] top-[425px] w-[42px] h-[23px] bg-[#808080] rounded-[2px] text-white text-[13px] flex items-center justify-center">70.00</div>
      <div className="absolute left-[1410px] top-[494px] w-[42px] h-[24px] bg-[#808080] rounded-[2px] text-white text-[13px] flex items-center justify-center">30.00</div>
      <Settings className="absolute left-[1448px] top-[534px] w-4 h-4 text-[#555555]" strokeWidth={1.4} />
    </>
  );
}

function Stat({ label, value, green }: { label: string; value: string; green?: boolean }) {
  return (
    <div className="text-[14px] leading-[18px]">
      <div className="text-[#777b84]">{label}</div>
      <div className={green ? "text-[#0abf85]" : "text-[#333a47]"}>{value}</div>
    </div>
  );
}

function SidePanel() {
  const rows = [
    ["EURUSD", "Euro vs US Dollar", "1.16952", "text-[#f55a5a]"],
    ["AUDUSD", "Australian Dollar", "0.66413", "text-[#f55a5a]"],
    ["NZDUSD", "New Zealand Dollar", "0.58014", "text-[#0abf85]"],
  ];
  return (
    <div className="w-[302px] h-[607px] bg-white rounded-t-[10px] ml-1 px-[17px] pt-[15px] overflow-hidden shrink-0">
      <div className="h-[24px] flex items-center">
        <svg viewBox="0 0 24 24" className="w-6 h-6 shrink-0">
          <circle cx="9" cy="8" r="7.5" fill="#2b4a9b" />
          <path d="M2.5 4L15.5 12M15.5 4L2.5 12" stroke="#ffffff" strokeWidth="2" />
          <path d="M9 0.5V15.5M1.5 8H16.5" stroke="#ffffff" strokeWidth="3" />
          <path d="M9 0.5V15.5M1.5 8H16.5" stroke="#d8232a" strokeWidth="1.5" />
          <circle cx="15" cy="16" r="7.5" fill="#ffffff" />
          <path d="M8.5 12.5H21.5M7.5 16H22.5M8.5 19.5H21.5" stroke="#d8232a" strokeWidth="1.8" />
          <path d="M8 13A7.5 7.5 0 0 1 15 8.5V15H8Z" fill="#2b4a9b" />
        </svg>
        <span className="ml-[9px] text-[16px] font-medium text-[#333a47]">GBPUSD</span>
        <Star className="w-[15px] h-[15px] ml-auto mr-[4px] text-[#9aa0a8]" strokeWidth={1.3} />
      </div>

      <div className="mt-[15px] h-[40px] flex items-center text-[#0abf85] font-medium whitespace-nowrap">
        <span className="text-[35px] leading-none tracking-[-1.5px]">1.33729</span>
        <span className="ml-[13px] text-[17px] tracking-[-0.4px] mt-[6px]">-0.00083</span>
        <span className="ml-[9px] text-[17px] tracking-[-0.4px] mt-[6px]">(-0.06%)</span>
      </div>
      <div className="mt-[6px] text-[12px] leading-[16px] text-[#777b84]">盘中交易</div>
      <div className="mt-[9px] h-[22px] w-[79px] rounded bg-[#f5f5f5] text-[12.5px] text-[#666a72] flex items-center justify-center">BeeMarkets</div>

      <div className="mt-[24px] grid grid-cols-[90px_89px_1fr] gap-y-[11px]">
        <Stat label="今开" value="1.33771" />
        <Stat label="最高" value="1.33920" />
        <Stat label="买价" value="1.33729" green />
        <Stat label="昨收" value="1.33812" />
        <Stat label="最低" value="1.33595" />
        <Stat label="卖价" value="1.33729" green />
      </div>
      <div className="mt-[16px] h-px bg-[#e8e8e8]" />

      <div className="mt-[22px] h-[20px] flex items-center justify-between">
        <span className="text-[14px] font-bold text-[#333a47]">表现</span>
        <ChevronUp className="w-6 h-6 -mr-[3px] text-[#333a47]" strokeWidth={1.3} />
      </div>
      <div className="mt-[13px] grid grid-cols-[90px_89px_1fr] gap-y-[11px]">
        <Stat label="近5日" value="+0.29%" />
        <Stat label="近1月" value="+1.50%" />
        <Stat label="近6月" value="-0.92%" />
        <Stat label="近1年" value="+4.76%" />
        <Stat label="近5年" value="+0.60%" />
        <Stat label="上市至今" value="+1.54%" />
        <Stat label="52周最高" value="1.37887" />
        <Stat label="52周最低" value="1.27084" />
        <Stat label="最大跌幅" value="49.25%" green />
      </div>

      <div className="mt-[21px] h-[20px] flex items-center">
        <span className="text-[14px] font-bold text-[#333a47]">相关品种</span>
        <svg viewBox="0 0 16 16" className="w-4 h-4 ml-auto" {...ink}><rect x="1" y="1" width="14" height="14" rx="2" /><path d="M4.5 5.5H11.5M4.5 9H9" /></svg>
        <ChevronUp className="w-6 h-6 ml-[3px] -mr-[3px] text-[#333a47]" strokeWidth={1.3} />
      </div>
      <div className="mt-[17px] h-[18px] flex items-center text-[12px] text-[#a3a7ae]">
        <span className="w-[94px]">资产</span>
        <span>名称</span>
        <span className="ml-auto">最新价</span>
      </div>
      <div>
        {rows.map(([a, b, c, col]) => (
          <div key={a} className="h-[32px] flex items-center text-[14px]">
            <span className="w-[94px] text-[#333a47] shrink-0">{a}</span>
            <span className="w-[84px] text-[#666a72] truncate">{b}</span>
            <span className={`ml-auto ${col}`}>{c}</span>
          </div>
        ))}
      </div>
    </div>
  );
}

export default function App() {
  return (
    <div className="w-[1840px] h-[612px] bg-[#f5f5f5] pt-[5px] flex overflow-hidden font-[Roboto,'Noto_Sans_CJK_SC',sans-serif]">
      <div className="w-[1526px] h-[607px] bg-white rounded-tr-[10px] flex flex-col shrink-0">
        <TopBar />
        <div className="flex flex-1 min-h-0">
          <LeftTools />
          <div className="relative flex-1">
            <ChartCanvas />
            <Legend />
            <AxisTags />
          </div>
        </div>
      </div>
      <SidePanel />
    </div>
  );
}
